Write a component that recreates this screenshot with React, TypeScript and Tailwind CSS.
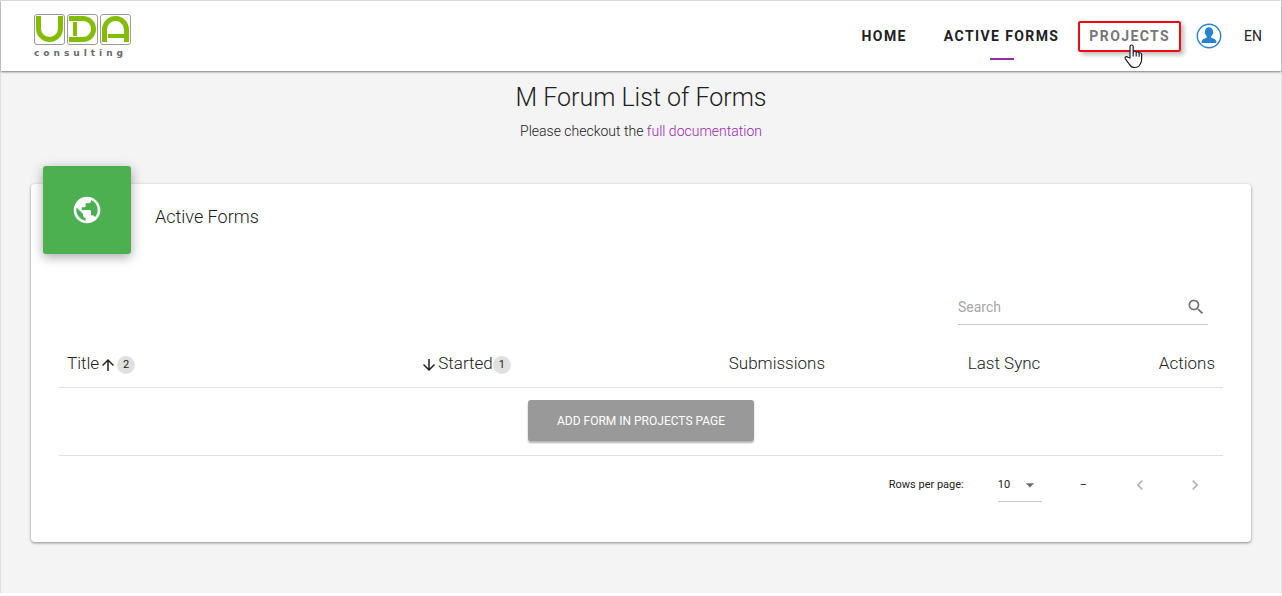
import type { ReactNode } from 'react';
import {
  MdArrowDownward,
  MdArrowDropDown,
  MdArrowUpward,
  MdChevronLeft,
  MdChevronRight,
  MdPublic,
  MdSearch,
} from 'react-icons/md';

function LogoTile({ children }: { children: ReactNode }) {
  return (
    <span className="relative block size-[31px] rounded-[3px] border border-[#9a9a9a]">
      {children}
    </span>
  );
}

function Logo() {
  return (
    <a href="#home" aria-label="UDA consulting" className="block text-[#6a6a72]">
      <span className="flex gap-0.5">
        <LogoTile>
          <span className="absolute inset-x-px top-px bottom-0.5 rounded-b-full border-[5px] border-t-0 border-[#84bc00]" />
        </LogoTile>
        <LogoTile>
          <span className="absolute top-px right-px bottom-0.5 left-px rounded-r-full border-[5px] border-l-0 border-[#84bc00]" />
          <span className="absolute top-[7px] left-[5px] h-3.5 w-1 bg-[#84bc00]" />
        </LogoTile>
        <LogoTile>
          <span className="absolute inset-x-px top-px bottom-0.5 rounded-t-full border-[5px] border-b-0 border-[#84bc00]" />
          <span className="absolute right-1.5 bottom-1.5 left-[7px] h-1 bg-[#84bc00]" />
        </LogoTile>
      </span>
      <span className="mt-0.5 -mr-1 block font-['DejaVu_Sans',sans-serif] text-[9px] leading-3 font-bold tracking-[4px]">
        consulting
      </span>
    </a>
  );
}

function UserIcon() {
  return (
    <svg viewBox="0 0 26 26" className="size-[26px]" aria-hidden="true">
      <circle cx="13" cy="13" r="11.7" fill="#fff" stroke="#2683d2" strokeWidth="1.4" />
      <path
        fill="#2683d2"
        d="M13 4.300c2.500 0 4 1.800 4 4.200 0 .5.3.8.3 1.400s-.4 1-.7 1.300c-.4 1-.9 1.700-1.400 2.200v1.200c.4.9 5.200 1.100 5.200 4.700v.7H5.600v-.7c0-3.600 4.800-3.800 5.200-4.700v-1.200c-.5-.5-1-1.200-1.400-2.200-.3-.3-.7-.7-.7-1.300s.3-.9.3-1.400c0-2.400 1.500-4.200 4-4.200z"
      />
    </svg>
  );
}

function HandCursor() {
  return (
    <svg
      viewBox="0 0 19 25"
      className="pointer-events-none absolute top-[21px] left-11 h-[25px] w-[19px]"
      aria-hidden="true"
    >
      <path
        d="M6 14V2.700C6 .4 9.200.4 9.200 2.700V8c.5-1.200 2.700-1 3 .4.700-1 2.600-.7 2.900.7.900-.7 2.500-.2 2.500 1.300v5.300c0 1.700-.5 2.900-1.300 4.200-.9 2.300-2.700 3.600-5.500 3.600-2.400 0-4-.9-5.200-2.900L1.400 14.900c-1-1.900 1.100-3 2.500-1.700z"
        fill="#fff"
        stroke="#1c1c2b"
        strokeWidth="1.2"
        strokeLinejoin="round"
      />
      <path d="M9.200 8v4.500M12.200 8.600v4M15.100 9.300v3.500" fill="none" stroke="#1c1c2b" strokeWidth="1.2" />
    </svg>
  );
}

function Badge({ children }: { children: ReactNode }) {
  return (
    <span className="mt-1 inline-flex size-[18px] items-center justify-center rounded-full bg-[#e0e0e0] text-[11px] font-normal">
      {children}
    </span>
  );
}

export default function App() {
  return (
    <div className="border-x border-t border-[#e0e0e0] bg-[#f4f4f4] font-[Roboto,sans-serif] font-light text-[#212121]">
      <header className="relative flex h-[70px] items-center justify-between bg-white pr-[19px] pl-[33px] shadow-[0_1px_2px_rgba(0,0,0,0.5)]">
        <Logo />
        <nav aria-label="Main" className="flex items-center text-sm font-bold tracking-widest">
          <a href="#home">HOME</a>
          <a href="#forms" className="relative ml-[37px]">
            ACTIVE FORMS
            <span className="absolute top-8 left-1/2 h-0.5 w-6 -translate-x-1/2 bg-[#9c27b0]" />
          </a>
          <a
            href="#projects"
            className="relative ml-[19px] rounded-[2px] border-2 border-[#f00a12] px-[9px] py-px leading-[25px] text-[#777] shadow-[3px_3px_4px_rgba(0,0,0,0.25)]"
          >
            PROJECTS
            <HandCursor />
          </a>
          <a href="#account" aria-label="Account" className="ml-[15px]">
            <UserIcon />
          </a>
          <button type="button" className="ml-[22px] font-normal tracking-normal">
            EN
          </button>
        </nav>
      </header>

      <main className="px-[30px] pb-[51px]">
        <div className="pt-[9px] text-center">
          <h1 className="text-[25px] leading-9">M Forum List of Forms</h1>
          <p className="mt-[5px] text-sm leading-5">
            Please checkout the{' '}
            <a href="#docs" className="text-[#9c27b0]">
              full documentation
            </a>
          </p>
        </div>

        <section className="mt-[43px] rounded bg-white px-7 pb-[39px] shadow-[0_1px_3px_rgba(0,0,0,0.45)]">
          <div className="flex">
            <div className="-mt-[18px] -ml-4 flex size-[88px] items-center justify-center rounded-[3px] bg-[#4caf50] text-white shadow-[0_3px_12px_rgba(0,0,0,0.35)]">
              <MdPublic size={32} />
            </div>
            <h2 className="mt-[21px] ml-6 text-lg leading-6">Active Forms</h2>
          </div>

          <div className="mt-9 mr-[15px] ml-auto flex h-[35px] max-w-[250px] items-center border-b border-[#c8c8c8]">
            <input
              type="search"
              aria-label="Search"
              placeholder="Search"
              className="min-w-0 flex-1 bg-transparent text-sm font-normal outline-none placeholder:text-[#a6a6a6]"
            />
            <button type="button" aria-label="Run search" className="mr-0.5 text-[#707070]">
              <MdSearch size={20} />
            </button>
          </div>

          <table className="w-full table-fixed text-[17px] leading-6">
            <thead>
              <tr className="border-b border-[#e0e0e0]">
                <th className="w-1/5 px-2 pt-[26px] pb-3 text-left font-light">
                  <span className="flex items-center">
                    Title
                    <MdArrowUpward size={18} className="mt-1" />
                    <Badge>2</Badge>
                  </span>
                </th>
                <th className="w-[19.5%] px-2 pt-[26px] pb-3 font-light">
                  <span className="flex items-center justify-end">
                    <MdArrowDownward size={18} className="mt-1" />
                    Started
                    <Badge>1</Badge>
                  </span>
                </th>
                <th className="w-[27%] px-2 pt-[26px] pb-3 text-right font-light">Submissions</th>
                <th className="w-[18.5%] px-2 pt-[26px] pb-3 text-right font-light">Last Sync</th>
                <th className="px-2 pt-[26px] pb-3 text-right font-light">Actions</th>
              </tr>
            </thead>
            <tbody>
              <tr className="border-b border-[#e0e0e0]">
                <td colSpan={5} className="pt-3 pb-[14px] text-center">
                  <button
                    type="button"
                    className="mx-auto block h-[41px] rounded-[3px] bg-[#999] px-[29px] text-xs font-normal text-white shadow-[0_2px_2px_rgba(0,0,0,0.3)]"
                  >
                    ADD FORM IN PROJECTS PAGE
                  </button>
                </td>
              </tr>
            </tbody>
          </table>

          <div className="flex items-start justify-end pt-[11px] pr-[18px] text-[11px] leading-9 font-normal">
            <label htmlFor="page-size">Rows per page:</label>
            <span className="relative ml-[34px] block w-11 border-b border-[#c8c8c8]">
              <select
                id="page-size"
                defaultValue="10"
                className="block h-[34px] w-full appearance-none bg-transparent outline-none"
              >
                <option>10</option>
                <option>25</option>
              </select>
              <MdArrowDropDown
                size={20}
                className="pointer-events-none absolute top-2 right-0.5 text-[#6b6b7b]"
              />
            </span>
            <span className="ml-[38px]">–</span>
            <button type="button" disabled aria-label="Previous page" className="mt-2 ml-[43px] text-[#b5b5b5]">
              <MdChevronLeft size={20} />
            </button>
            <button type="button" disabled aria-label="Next page" className="mt-2 ml-[35px] text-[#b5b5b5]">
              <MdChevronRight size={20} />
            </button>
          </div>
        </section>
      </main>
    </div>
  );
}
